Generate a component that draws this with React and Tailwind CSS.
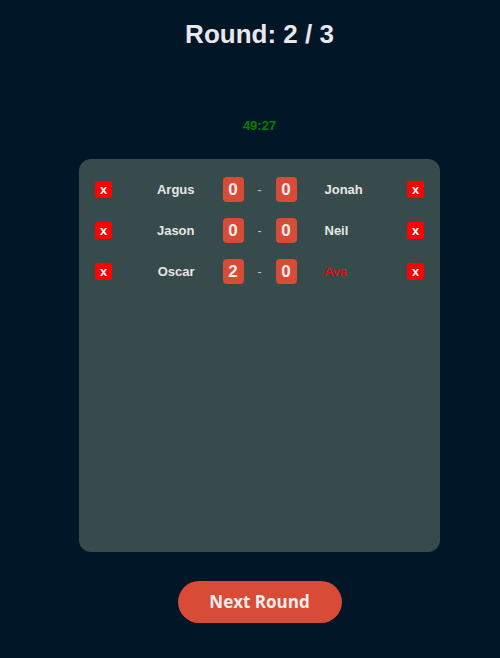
import React from "react";

const matches = [
  { left: "Argus", right: "Jonah", scoreLeft: 0, scoreRight: 0, rightOut: false },
  { left: "Jason", right: "Neil", scoreLeft: 0, scoreRight: 0, rightOut: false },
  { left: "Oscar", right: "Ava", scoreLeft: 2, scoreRight: 0, rightOut: true },
];

const RemoveButton = () => (
  <button className="w-[17px] h-[17px] rounded-[2px] bg-[#ff0000] text-white text-[13px] font-bold leading-none flex items-center justify-center pb-[1px]">
    x
  </button>
);

const ScoreBox = ({ value }) => (
  <div className="w-[21px] h-[25px] rounded-[4px] bg-[#d84c37] text-[#f3eded] text-[17px] font-bold flex items-center justify-center">
    {value}
  </div>
);

export default function App() {
  return (
    <div
      className="min-h-[658px] w-full bg-[#011627] pl-[19px] flex flex-col items-center"
      style={{ fontFamily: '"Liberation Sans", Arial, sans-serif' }}
    >
      <h1 className="mt-[19px] text-[26px] font-bold leading-[30px] text-[#e8e8ec]">
        Round: 2 / 3
      </h1>

      <div className="mt-[69px] text-[13px] font-bold leading-[16px] text-[#008000]">49:27</div>

      <div className="mt-[25px] w-[361px] h-[393px] rounded-xl bg-[#374b4c] px-4 pt-[18px] flex flex-col gap-4">
        {matches.map((m) => (
          <div key={m.left} className="flex items-center h-[25px]">
            <RemoveButton />
            <div className="flex-1 text-right text-[13px] font-bold text-[#e6e6e6]">{m.left}</div>
            <div className="ml-7">
              <ScoreBox value={m.scoreLeft} />
            </div>
            <div className="w-8 text-center text-[12px] text-[#c8c8c8]">-</div>
            <ScoreBox value={m.scoreRight} />
            <div
              className={`flex-1 ml-7 text-[13px] ${
                m.rightOut ? "text-[#ff0000] font-normal" : "text-[#e6e6e6] font-bold"
              }`}
            >
              {m.right}
            </div>
            <RemoveButton />
          </div>
        ))}
      </div>

      <button
        className="mt-[29px] w-[164px] h-[42px] rounded-full bg-[#d84c37] text-[#f3eded] text-[17px] font-bold"
        style={{ fontFamily: '"Open Sans", sans-serif' }}
      >
        Next Round
      </button>
    </div>
  );
}
